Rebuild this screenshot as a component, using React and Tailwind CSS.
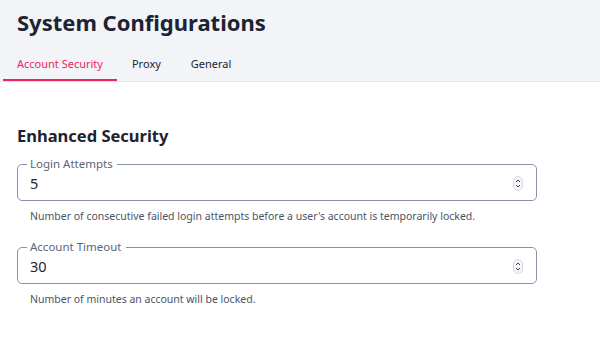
import React from 'react'

const fields = [
  {
    label: 'Login Attempts',
    value: '5',
    help: "Number of consecutive failed login attempts before a user's account is temporarily locked.",
  },
  {
    label: 'Account Timeout',
    value: '30',
    help: 'Number of minutes an account will be locked.',
  },
]

function Spinner() {
  return (
    <div className="flex h-[15px] w-[10px] flex-col items-center justify-center rounded-full border border-[#d5d9e0] bg-[#f4f5f7]">
      <svg width="6" height="4" viewBox="0 0 6 4" className="mb-[1px]">
        <path d="M1 3 L3 1 L5 3" fill="none" stroke="#3c4454" strokeWidth="1" />
      </svg>
      <svg width="6" height="4" viewBox="0 0 6 4">
        <path d="M1 1 L3 3 L5 1" fill="none" stroke="#3c4454" strokeWidth="1" />
      </svg>
    </div>
  )
}

function NumberField({ label, value, help }) {
  return (
    <div>
      <fieldset className="m-0 w-[520px] rounded-[5px] border border-[#8a93a6] px-[8px] pb-[7px] pt-0">
        <legend className="ml-[1px] pl-[3px] pr-[4px] text-[11.5px] leading-[14px] text-[#5b6578]">{label}</legend>
        <div className="flex items-center justify-between pl-[4px] pr-[5px] pt-[2px]">
          <span className="text-[14.5px] leading-[20px] text-[#1c2331]">{value}</span>
          <Spinner />
        </div>
      </fieldset>
      <p className="mt-[8px] pl-[13px] text-[10.5px] leading-[14px] text-[#4a5366]">{help}</p>
    </div>
  )
}

export default function App() {
  const tabs = ['Account Security', 'Proxy', 'General']
  return (
    <div className="h-[342px] w-[600px] bg-white font-['Noto_Sans',sans-serif]">
      <div className="border-b border-[#e1e4ea] bg-[#f2f4f8]">
        <h1 className="px-[17px] pt-[7px] text-[22px] font-bold leading-[30px] text-[#1c2331]">System Configurations</h1>
        <div className="mt-[19px] flex pl-[3px]">
          {tabs.map((t, i) => (
            <div
              key={t}
              className={`px-[14px] pb-[7px] text-[11px] leading-[16px] ${
                i === 0 ? 'border-b-2 border-[#f0245a] text-[#f0245a]' : 'border-b-2 border-transparent px-[15px] text-[#1c2331]'
              }`}
            >
              {t}
            </div>
          ))}
        </div>
      </div>
      <div className="px-[17px] pt-[43px]">
        <h2 className="text-[16.5px] font-bold leading-[22px] text-[#1c2331]">Enhanced Security</h2>
        <div className="mt-[10px] flex flex-col gap-[17px]">
          {fields.map((f) => (
            <NumberField key={f.label} {...f} />
          ))}
        </div>
      </div>
    </div>
  )
}
